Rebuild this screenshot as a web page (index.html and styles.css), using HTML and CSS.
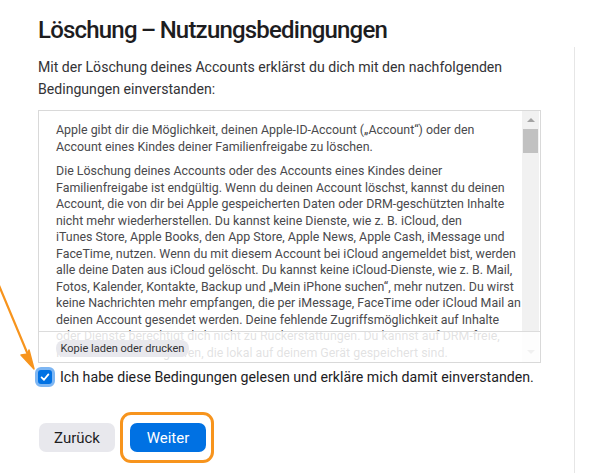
FILE: index.html
```html
<!DOCTYPE html>
<html lang="de">
<head>
<meta charset="utf-8">
<link rel="stylesheet" href="styles.css">
</head>
<body>
<div class="page">
  <h1 class="title">Löschung – Nutzungsbedingungen</h1>
  <div class="main">
    <p class="intro">Mit der Löschung deines Accounts erklärst du dich mit den nachfolgenden Bedingungen einverstanden:</p>
    <div class="terms">
      <div class="terms-text">
        <p>Apple gibt dir die Möglichkeit, deinen Apple-ID-Account („Account“) oder den<br>Account eines Kindes deiner Familienfreigabe zu löschen.</p>
        <p>Die Löschung deines Accounts oder des Accounts eines Kindes deiner<br>Familienfreigabe ist endgültig. Wenn du deinen Account löschst, kannst du deinen<br>Account, die von dir bei Apple gespeicherten Daten oder DRM-geschützten Inhalte<br>nicht mehr wiederherstellen. Du kannst keine Dienste, wie z. B. iCloud, den<br>iTunes Store, Apple Books, den App Store, Apple News, Apple Cash, iMessage und<br>FaceTime, nutzen. Wenn du mit diesem Account bei iCloud angemeldet bist, werden<br>alle deine Daten aus iCloud gelöscht. Du kannst keine iCloud-Dienste, wie z. B. Mail,<br>Fotos, Kalender, Kontakte, Backup und „Mein iPhone suchen“, mehr nutzen. Du wirst<br>keine Nachrichten mehr empfangen, die per iMessage, FaceTime oder iCloud Mail an<br>deinen Account gesendet werden. Deine fehlende Zugriffsmöglichkeit auf Inhalte<br>oder Dienste berechtigt dich nicht zu Rückerstattungen. Du kannst auf DRM-freie,<br>Inhalte weiterhin zugreifen, die lokal auf deinem Gerät gespeichert sind.</p>
      </div>
      <div class="scrollbar">
        <span class="arrow-up"></span>
        <span class="thumb"></span>
        <span class="track"></span>
        <span class="arrow-down"></span>
      </div>
      <div class="terms-footer">
        <button class="copy-btn">Kopie laden oder drucken</button>
      </div>
    </div>
    <label class="agree">
      <span class="check">
        <svg viewBox="0 0 14 14" width="14" height="14"><path d="M3.6 7.4 L6 9.8 L10.4 4.4" fill="none" stroke="#fff" stroke-width="1.8" stroke-linecap="round" stroke-linejoin="round"/></svg>
      </span>
      <span class="agree-text">Ich habe diese Bedingungen gelesen und erkläre mich damit einverstanden.</span>
    </label>
    <div class="actions">
      <button class="btn btn-secondary">Zurück</button>
      <span class="highlight">
        <button class="btn btn-primary">Weiter</button>
      </span>
    </div>
  </div>
</div>
<svg class="pointer" width="60" height="120" viewBox="0 0 60 120">
  <line x1="-2" y1="13" x2="31" y2="92" stroke="#f7941d" stroke-width="2.2" stroke-linecap="round"/>
  <path d="M34 99 L21 85 L28 84 L29 80 Z" fill="#f7941d" stroke="#f7941d" stroke-width="1.5" stroke-linejoin="round"/>
</svg>
</body>
</html>
```
FILE: styles.css
```css
* { box-sizing: border-box; }
html, body { margin: 0; padding: 0; background: #fff; }
body {
  font-family: Roboto, "Noto Sans", "Liberation Sans", sans-serif;
  color: #1d1d1f;
  position: relative;
  height: 473px;
  overflow: hidden;
}
.page { padding: 13px 0 0 38px; }
.title {
  margin: 0;
  font-size: 24px;
  font-weight: 500;
  letter-spacing: -0.8px;
  word-spacing: -1px;
  line-height: 34px;
  color: #1d1d1f;
}
.main {
  width: 537px;
  border-right: 1px solid #e6e6e6;
  padding-top: 10px;
  height: 430px;
}
.intro {
  margin: 0;
  width: 490px;
  font-size: 14.1px;
  line-height: 21.5px;
  color: #333336;
}
.terms {
  position: relative;
  margin-top: 10px;
  width: 503px;
  height: 253px;
  border: 1px solid #d9d9d9;
  display: flex;
  overflow: hidden;
}
.terms-text {
  flex: 1;
  padding: 11px 0 0 17px;
  font-size: 12.4px;
  line-height: 16.5px;
  color: #4a4a4d;
  white-space: nowrap;
  overflow: hidden;
}
.terms-text p { margin: 0 0 8px; }
.scrollbar {
  width: 17px;
  margin: 0 1px 0 0;
  background: #f1f1f1;
  display: flex;
  flex-direction: column;
  align-items: center;
}
.arrow-up {
  margin-top: 7px;
  width: 0; height: 0;
  border-left: 4px solid transparent;
  border-right: 4px solid transparent;
  border-bottom: 4px solid #a3a3a3;
}
.thumb {
  margin-top: 7px;
  width: 15px;
  height: 24px;
  background: #c1c1c1;
}
.track { flex: 1; }
.arrow-down {
  margin-bottom: 8px;
  width: 0; height: 0;
  border-left: 4px solid transparent;
  border-right: 4px solid transparent;
  border-top: 4px solid #a3a3a3;
}
.terms-footer {
  position: absolute;
  left: 0; right: 0; bottom: 0;
  height: 31px;
  border-top: 1px solid #dcdcdc;
  background: rgba(255,255,255,0.84);
  padding: 5px 0 0 17px;
}
.copy-btn {
  border: 0;
  background: #e8e8ed;
  color: #333336;
  font-family: inherit;
  font-size: 11px;
  height: 17px;
  width: 133px;
  border-radius: 8px;
  padding: 0;
}
.agree {
  display: flex;
  align-items: center;
  margin-top: 4px;
  margin-left: -3px;
  gap: 5px;
  height: 20px;
}
.check {
  width: 20px;
  height: 20px;
  border-radius: 6px;
  background: #0071e3;
  border: 3px solid #7db6f3;
  display: flex;
  align-items: center;
  justify-content: center;
}
.check svg { display: block; }
.agree-text {
  font-size: 14.2px;
  color: #1d1d1f;
}
.actions {
  display: flex;
  gap: 15px;
  margin-top: 36px;
  padding-left: 1px;
}
.btn {
  border: 0;
  font-family: inherit;
  font-size: 15px;
  width: 76px;
  height: 29px;
  border-radius: 7px;
  padding: 0;
}
.btn-secondary { background: #e8e8ed; color: #1d1d1f; }
.btn-primary { background: #0071e3; color: #fff; }
.highlight {
  position: relative;
  display: flex;
}
.highlight::after {
  content: "";
  position: absolute;
  left: -10px; right: -8px; top: -11px; bottom: -11px;
  border: 3px solid #f7941d;
  border-radius: 11px;
  pointer-events: none;
}
.pointer {
  position: absolute;
  left: 0;
  top: 270px;
  overflow: visible;
}
```
